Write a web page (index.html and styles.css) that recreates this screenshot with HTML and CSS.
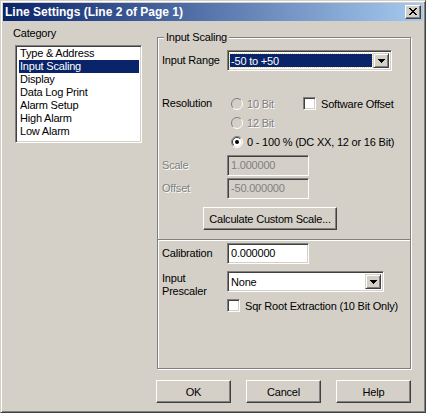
FILE: index.html
```html
<!DOCTYPE html>
<html lang="en">
<head>
    <meta charset="UTF-8">
    <title>Line Settings (Line 2 of Page 1)</title>
    <link rel="stylesheet" href="styles.css">
</head>
<body>
    <div class="window">
        <div class="titlebar">
            <span class="title">Line Settings (Line 2 of Page 1)</span>
            <div class="close-btn">
                <svg width="8" height="7" viewBox="0 0 8 7" shape-rendering="crispEdges">
                    <path d="M0 0h2v1H0zM6 0h2v1H6zM1 1h2v1H1zM5 1h2v1H5zM2 2h4v1H2zM3 3h2v1H3zM2 4h4v1H2zM1 5h2v1H1zM5 5h2v1H5zM0 6h2v1H0zM6 6h2v1H6z" fill="#000"/>
                </svg>
            </div>
        </div>
        <div class="client">
            <div class="main">
                <!-- Category list -->
                <div class="category">
                    <div class="cat-label">Category</div>
                    <ul class="listbox">
                        <li>Type &amp; Address</li>
                        <li class="selected">Input Scaling</li>
                        <li>Display</li>
                        <li>Data Log Print</li>
                        <li>Alarm Setup</li>
                        <li>High Alarm</li>
                        <li>Low Alarm</li>
                    </ul>
                </div>

                <!-- Input Scaling group -->
                <div class="group">
                    <span class="legend">Input Scaling</span>
                    <div class="row range-row">
                        <span class="label">Input Range</span>
                        <div class="combo combo-range">
                            <span class="combo-text focused">-50 to +50</span>
                            <span class="combo-btn">
                                <svg width="7" height="4" viewBox="0 0 7 4" shape-rendering="crispEdges"><path d="M0 0h7v1H0zM1 1h5v1H1zM2 2h3v1H2zM3 3h1v1H3z" fill="#000"/></svg>
                            </span>
                        </div>
                    </div>

                    <div class="resolution">
                        <span class="label">Resolution</span>
                        <div class="radios">
                            <div class="radio-row">
                                <div class="radio disabled">
                                    <svg class="circle" width="12" height="12" viewBox="0 0 12 12"><circle cx="6" cy="6" r="4.5" fill="#D4D0C8"/><path d="M2.1 9.9A5.5 5.5 0 0 1 9.9 2.1" fill="none" stroke="#808080"/><path d="M9.9 2.1A5.5 5.5 0 0 1 2.1 9.9" fill="none" stroke="#fff"/></svg>
                                    <span class="text">10 Bit</span>
                                </div>
                                <div class="check"><span class="box"></span>Software Offset</div>
                            </div>
                            <div class="radio-row">
                                <div class="radio disabled">
                                    <svg class="circle" width="12" height="12" viewBox="0 0 12 12"><circle cx="6" cy="6" r="4.5" fill="#D4D0C8"/><path d="M2.1 9.9A5.5 5.5 0 0 1 9.9 2.1" fill="none" stroke="#808080"/><path d="M9.9 2.1A5.5 5.5 0 0 1 2.1 9.9" fill="none" stroke="#fff"/></svg>
                                    <span class="text">12 Bit</span>
                                </div>
                            </div>
                            <div class="radio-row">
                                <div class="radio">
                                    <svg class="circle" width="12" height="12" viewBox="0 0 12 12"><circle cx="6" cy="6" r="4.5" fill="#fff"/><path d="M2.1 9.9A5.5 5.5 0 0 1 9.9 2.1" fill="none" stroke="#808080"/><path d="M9.9 2.1A5.5 5.5 0 0 1 2.1 9.9" fill="none" stroke="#fff"/><path d="M2.8 9.2A4.5 4.5 0 0 1 9.2 2.8" fill="none" stroke="#404040"/><circle cx="6" cy="6" r="2" fill="#000"/></svg>
                                    <span class="text">0 - 100 % (DC XX, 12 or 16 Bit)</span>
                                </div>
                            </div>
                        </div>
                    </div>

                    <div class="row field-row scale-row">
                        <span class="label disabled-text">Scale</span>
                        <div class="field disabled-field">1.000000</div>
                    </div>
                    <div class="row field-row">
                        <span class="label disabled-text">Offset</span>
                        <div class="field disabled-field">-50.000000</div>
                    </div>

                    <div class="button calc-btn">Calculate Custom Scale...</div>

                    <div class="separator"></div>

                    <div class="row field-row calib-row">
                        <span class="label">Calibration</span>
                        <div class="field">0.000000</div>
                    </div>
                    <div class="row prescaler-row">
                        <span class="label two-line">Input<br>Prescaler</span>
                        <div class="combo combo-prescaler">
                            <span class="combo-text">None</span>
                            <span class="combo-btn">
                                <svg width="7" height="4" viewBox="0 0 7 4" shape-rendering="crispEdges"><path d="M0 0h7v1H0zM1 1h5v1H1zM2 2h3v1H2zM3 3h1v1H3z" fill="#000"/></svg>
                            </span>
                        </div>
                    </div>
                    <div class="check sqr-check"><span class="box"></span>Sqr Root Extraction (10 Bit Only)</div>
                </div>
            </div>

            <div class="actions">
                <div class="button">OK</div>
                <div class="button">Cancel</div>
                <div class="button">Help</div>
            </div>
        </div>
    </div>
</body>
</html>
```

FILE: styles.css
```css
body {
    margin: 0;
    font-family: "Liberation Sans", Arial, sans-serif;
    font-size: 11px;
    letter-spacing: -0.2px;
    color: #000;
}
.window {
    width: 426px;
    height: 413px;
    box-sizing: border-box;
    background: #D4D0C8;
    border: 1px solid;
    border-color: #D4D0C8 #404040 #404040 #D4D0C8;
    box-shadow: inset 1px 1px 0 #fff, inset -1px -1px 0 #808080;
    padding: 2px;
    display: flex;
    flex-direction: column;
}
.titlebar {
    height: 18px;
    display: flex;
    align-items: center;
    justify-content: space-between;
    padding: 0 2px;
    background: linear-gradient(to right, #0A246A, #A6CAF0);
}
.title {
    color: #fff;
    font-weight: bold;
    font-size: 12px;
    letter-spacing: 0;
}
.close-btn {
    width: 16px;
    height: 14px;
    box-sizing: border-box;
    background: #D4D0C8;
    border: 1px solid;
    border-color: #fff #404040 #404040 #fff;
    box-shadow: inset -1px -1px 0 #808080;
    display: flex;
    align-items: center;
    justify-content: center;
    padding-bottom: 1px;
}
.client {
    flex: 1;
    display: flex;
    flex-direction: column;
}
.main {
    display: flex;
}
.category {
    width: 154px;
    padding-top: 6px;
}
.cat-label {
    line-height: 13px;
    margin-left: 10px;
}
.listbox {
    list-style: none;
    margin: 5px 0 0 12px;
    padding: 1px 2px;
    width: 127px;
    height: 98px;
    box-sizing: border-box;
    background: #fff;
    border: 1px solid;
    border-color: #808080 #fff #fff #808080;
    box-shadow: inset 1px 1px 0 #404040, inset -1px -1px 0 #D4D0C8;
}
.listbox li {
    height: 13px;
    line-height: 13px;
    padding-left: 1px;
    margin-left: 1px;
}
.listbox li.selected {
    background: #0A246A;
    color: #fff;
}
.group {
    margin-top: 16px;
    width: 254px;
    height: 332px;
    box-sizing: border-box;
    border: 1px solid #808080;
    box-shadow: 1px 1px 0 #fff, inset 1px 1px 0 #fff;
}
.legend {
    display: block;
    width: fit-content;
    margin: -7px 0 0 6px;
    padding: 0 2px;
    line-height: 13px;
    background: #D4D0C8;
}
.row {
    display: flex;
    align-items: center;
    padding-left: 4px;
}
.label {
    width: 65px;
    flex-shrink: 0;
    line-height: 13px;
}
.range-row {
    margin-top: 6px;
}
.combo {
    height: 21px;
    box-sizing: border-box;
    display: flex;
    padding: 2px;
    background: #fff;
    border: 1px solid;
    border-color: #808080 #fff #fff #808080;
    box-shadow: inset 1px 1px 0 #404040, inset -1px -1px 0 #D4D0C8;
}
.combo-range {
    width: 165px;
}
.combo-prescaler {
    width: 157px;
}
.combo-text {
    flex: 1;
    line-height: 15px;
    margin: 1px 1px 1px 0;
    padding-left: 1px;
}
.combo-text.focused {
    background: #0A246A;
    color: #fff;
    outline: 1px dotted #E8DC98;
}
.combo-btn {
    width: 16px;
    box-sizing: border-box;
    background: #D4D0C8;
    border: 1px solid;
    border-color: #D4D0C8 #404040 #404040 #D4D0C8;
    box-shadow: inset 1px 1px 0 #fff, inset -1px -1px 0 #808080;
    display: flex;
    align-items: center;
    justify-content: center;
}
.resolution {
    display: flex;
    padding-left: 4px;
    margin-top: 23px;
}
.resolution .label {
    line-height: 19px;
}
.radios {
    margin-left: 4px;
}
.radio-row {
    display: flex;
    align-items: center;
    height: 19px;
}
.radio {
    display: flex;
    align-items: center;
    width: 72px;
    white-space: nowrap;
}
.circle {
    flex-shrink: 0;
    margin-right: 4px;
}
.disabled .text,
.disabled-text {
    color: #808080;
    text-shadow: 1px 1px 0 #fff;
}
.check {
    display: flex;
    align-items: center;
    white-space: nowrap;
}
.box {
    width: 13px;
    height: 13px;
    box-sizing: border-box;
    background: #fff;
    border: 1px solid;
    border-color: #808080 #fff #fff #808080;
    box-shadow: inset 1px 1px 0 #404040, inset -1px -1px 0 #D4D0C8;
    margin-right: 5px;
}
.field-row {
    height: 21px;
}
.scale-row {
    margin-top: 4px;
}
.field-row + .field-row {
    margin-top: 2px;
}
.field {
    width: 82px;
    height: 21px;
    box-sizing: border-box;
    padding-left: 3px;
    line-height: 19px;
    background: #fff;
    border: 1px solid;
    border-color: #808080 #fff #fff #808080;
    box-shadow: inset 1px 1px 0 #404040, inset -1px -1px 0 #D4D0C8;
}
.disabled-field {
    background: #D4D0C8;
    color: #808080;
}
.button {
    width: 75px;
    height: 23px;
    box-sizing: border-box;
    display: flex;
    align-items: center;
    justify-content: center;
    background: #D4D0C8;
    border: 1px solid;
    border-color: #fff #404040 #404040 #fff;
    box-shadow: inset -1px -1px 0 #808080;
}
.calc-btn {
    width: 134px;
    margin: 8px 0 0 45px;
}
.separator {
    margin-top: 9px;
    height: 1px;
    background: #808080;
    border-bottom: 1px solid #fff;
}
.calib-row {
    margin-top: 2px;
}
.prescaler-row {
    margin-top: 7px;
    height: 21px;
}
.two-line {
    margin-top: 7px;
}
.sqr-check {
    margin: 7px 0 0 69px;
}
.actions {
    display: flex;
    justify-content: flex-end;
    gap: 15px;
    margin: 11px 12px 0 0;
}
```
